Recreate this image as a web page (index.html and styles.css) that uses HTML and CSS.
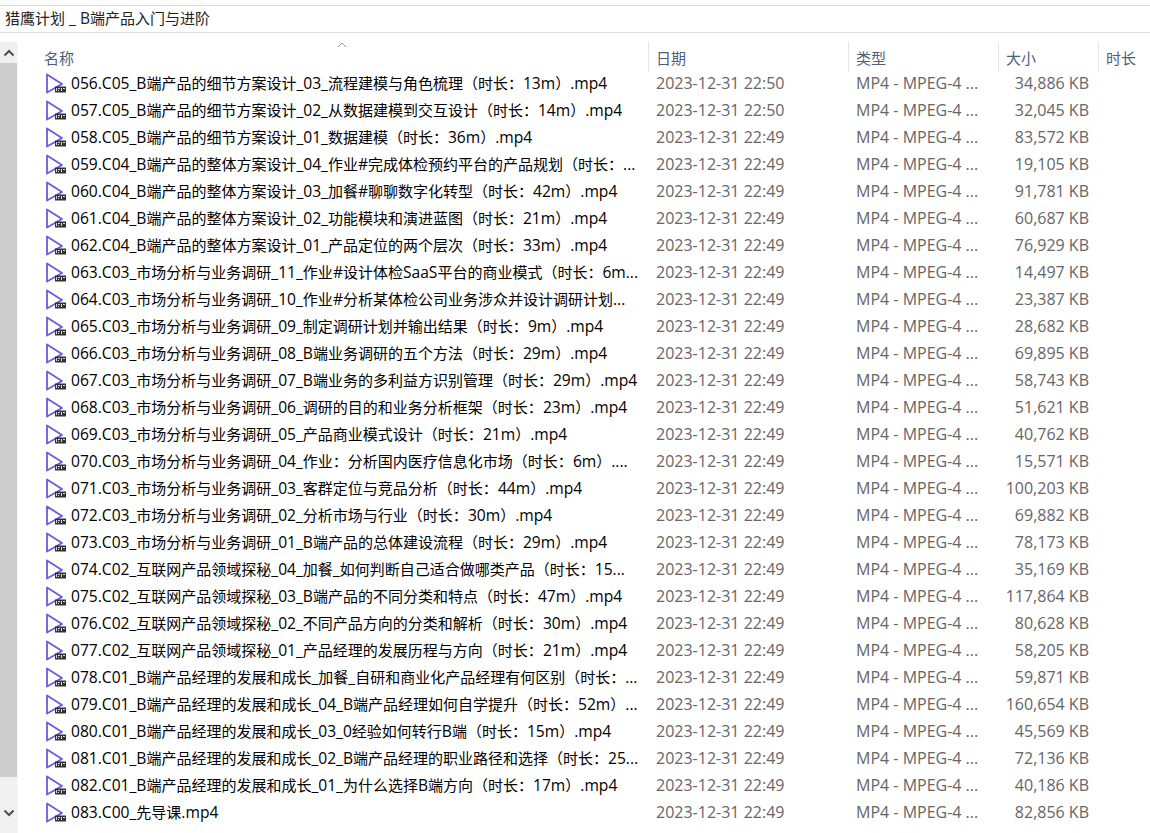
FILE: index.html
```html
<!DOCTYPE html>
<html lang="zh">
<head>
<meta charset="utf-8">
<title>猎鹰计划 _ B端产品入门与进阶</title>
<link rel="stylesheet" href="styles.css">
</head>
<body>
<svg class="defs" width="0" height="0" aria-hidden="true">
  <symbol id="file" viewBox="0 0 22 22">
    <path d="M2 1.5 L17 11 L2 19.5 Z" fill="#fff" stroke="#6f58e0" stroke-width="1.8" stroke-linejoin="round"/>
    <rect x="10" y="13.5" width="11" height="6" fill="#333"/>
    <path d="M11 15h1v1h-1zM13 15h2v1h-2zM16 15h1v3h-1zM18 15h2v1h-2zM11 16h1v2h-1zM13 17h1v1h-1z" fill="#d8d8d8"/>
  </symbol>
</svg>
<header class="title"><span class="zh">猎鹰计划</span> _ B<span class="zh">端产品入门与进阶</span></header>
<main class="pane">
  <aside class="scrollbar">
    <div class="sb-btn sb-up"><svg width="12" height="8" viewBox="0 0 12 8"><path d="M1.5 6.5 L6 2 L10.5 6.5" fill="none" stroke="#505050" stroke-width="2"/></svg></div>
    <div class="sb-thumb"></div>
    <div class="sb-track"></div>
    <div class="sb-btn sb-down"><svg width="12" height="8" viewBox="0 0 12 8"><path d="M1.5 1.5 L6 6 L10.5 1.5" fill="none" stroke="#505050" stroke-width="2"/></svg></div>
  </aside>
  <section class="list">
    <div class="head">
      <div class="hc hc-name">名称<svg class="sort" width="10" height="6" viewBox="0 0 10 6"><path d="M1 5 L5 1 L9 5" fill="none" stroke="#9a9a9a"/></svg></div>
      <div class="hc hc-date">日期</div>
      <div class="hc hc-type">类型</div>
      <div class="hc hc-size">大小</div>
      <div class="hc hc-dur">时长</div>
    </div>
    <div id="rows" class="rows"></div>
  </section>
</main>
<script src="app.js"></script>
</body>
</html>
```
FILE: styles.css
```css
* { box-sizing: border-box; }
html, body { margin: 0; height: 100%; }
body {
  width: 1150px;
  height: 833px;
  overflow: hidden;
  background: #fff;
  font-family: "Open Sans", "Noto Sans CJK SC", sans-serif;
  font-size: 16px;
}
.zh { font-size: 15px; }
.defs { position: absolute; }
.title {
  margin-top: 5px;
  height: 28px;
  border-top: 1px solid #dcdcdc;
  border-bottom: 1px solid #dcdcdc;
  padding-left: 5px;
  line-height: 25px;
  font-size: 15.6px;
  color: #222;
}
.pane { display: flex; height: 800px; }
.scrollbar {
  width: 18px;
  margin-top: 9px;
  display: flex;
  flex-direction: column;
  border-right: 1px solid #f6f6f6;
}
.sb-btn {
  height: 21px;
  background: #f0f0f0;
  display: flex;
  align-items: center;
  justify-content: center;
  flex: none;
}
.sb-thumb { height: 714px; background: #cdcdcd; flex: none; }
.sb-track { flex: 1; background: #f0f0f0; }
.sb-down { height: 35px; padding-bottom: 6px; }
.list { flex: 1; min-width: 0; padding-top: 9px; }
.head { display: flex; height: 30px; color: #4c607a; font-size: 15px; }
.hc {
  height: 30px;
  line-height: 33px;
  padding-left: 7px;
  border-right: 1px solid #e5e5e5;
  flex: none;
  position: relative;
}
.hc-name { width: 631px; padding-left: 26px; }
.hc-date { width: 200px; }
.hc-type { width: 150px; }
.hc-size { width: 100px; }
.hc-dur { width: 51px; border-right: 0; }
.sort { position: absolute; left: 319px; top: 0; }
.rows { margin-top: -1px; }
.row { display: flex; height: 27px; line-height: 24px; white-space: nowrap; }
.c-icon { width: 26px; margin-left: 27px; flex: none; display: flex; align-items: flex-start; padding-top: 2px; }
.c-name { width: 578px; flex: none; color: #000; font-size: 15.6px; overflow: hidden; }
.c-date { width: 200px; padding-left: 7px; flex: none; color: #666; }
.c-type { width: 150px; padding-left: 7px; flex: none; color: #666; }
.c-size { width: 90px; text-align: right; flex: none; color: #666; }
```
FILE: app.js
```js
var names = [
"056.C05_B端产品的细节方案设计_03_流程建模与角色梳理（时长：13m）.mp4",
"057.C05_B端产品的细节方案设计_02_从数据建模到交互设计（时长：14m）.mp4",
"058.C05_B端产品的细节方案设计_01_数据建模（时长：36m）.mp4",
"059.C04_B端产品的整体方案设计_04_作业#完成体检预约平台的产品规划（时长：...",
"060.C04_B端产品的整体方案设计_03_加餐#聊聊数字化转型（时长：42m）.mp4",
"061.C04_B端产品的整体方案设计_02_功能模块和演进蓝图（时长：21m）.mp4",
"062.C04_B端产品的整体方案设计_01_产品定位的两个层次（时长：33m）.mp4",
"063.C03_市场分析与业务调研_11_作业#设计体检SaaS平台的商业模式（时长：6m...",
"064.C03_市场分析与业务调研_10_作业#分析某体检公司业务涉众并设计调研计划...",
"065.C03_市场分析与业务调研_09_制定调研计划并输出结果（时长：9m）.mp4",
"066.C03_市场分析与业务调研_08_B端业务调研的五个方法（时长：29m）.mp4",
"067.C03_市场分析与业务调研_07_B端业务的多利益方识别管理（时长：29m）.mp4",
"068.C03_市场分析与业务调研_06_调研的目的和业务分析框架（时长：23m）.mp4",
"069.C03_市场分析与业务调研_05_产品商业模式设计（时长：21m）.mp4",
"070.C03_市场分析与业务调研_04_作业：分析国内医疗信息化市场（时长：6m）....",
"071.C03_市场分析与业务调研_03_客群定位与竞品分析（时长：44m）.mp4",
"072.C03_市场分析与业务调研_02_分析市场与行业（时长：30m）.mp4",
"073.C03_市场分析与业务调研_01_B端产品的总体建设流程（时长：29m）.mp4",
"074.C02_互联网产品领域探秘_04_加餐_如何判断自己适合做哪类产品（时长：15...",
"075.C02_互联网产品领域探秘_03_B端产品的不同分类和特点（时长：47m）.mp4",
"076.C02_互联网产品领域探秘_02_不同产品方向的分类和解析（时长：30m）.mp4",
"077.C02_互联网产品领域探秘_01_产品经理的发展历程与方向（时长：21m）.mp4",
"078.C01_B端产品经理的发展和成长_加餐_自研和商业化产品经理有何区别（时长：...",
"079.C01_B端产品经理的发展和成长_04_B端产品经理如何自学提升（时长：52m）...",
"080.C01_B端产品经理的发展和成长_03_0经验如何转行B端（时长：15m）.mp4",
"081.C01_B端产品经理的发展和成长_02_B端产品经理的职业路径和选择（时长：25...",
"082.C01_B端产品经理的发展和成长_01_为什么选择B端方向（时长：17m）.mp4",
"083.C00_先导课.mp4"
];
var sizes = ["34,886","32,045","83,572","19,105","91,781","60,687","76,929","14,497","23,387","28,682","69,895","58,743","51,621","40,762","15,571","100,203","69,882","78,173","35,169","117,864","80,628","58,205","59,871","160,654","45,569","72,136","40,186","82,856"];
function markup(s) {
  return s.replace(/[\u3000-\u9fff\uff00-\uffef]+/g, '<span class="zh">$&</span>');
}
var html = "";
for (var i = 0; i < names.length; i++) {
  html += '<div class="row"><div class="c-icon"><svg width="22" height="22"><use href="#file"/></svg></div>' +
    '<div class="c-name">' + markup(names[i]) + '</div>' +
    '<div class="c-date">2023-12-31 ' + (i < 2 ? "22:50" : "22:49") + '</div>' +
    '<div class="c-type">MP4 - MPEG-4 ...</div>' +
    '<div class="c-size">' + sizes[i] + ' KB</div></div>';
}
document.getElementById("rows").innerHTML = html;
```
